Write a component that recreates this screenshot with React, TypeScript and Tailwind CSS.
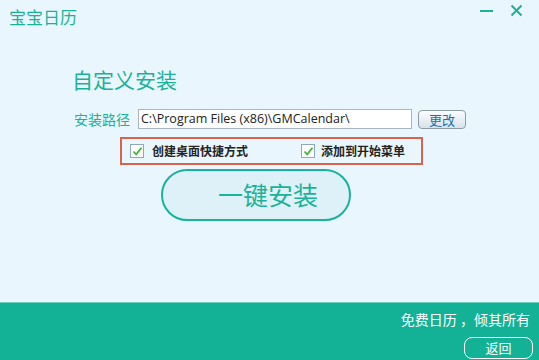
import React from "react";

const font = { fontFamily: '"Noto Sans CJK SC", "Noto Sans", sans-serif' };

function Check() {
  return (
    <div className="w-[14px] h-[14px] border border-[#8fa8bf] bg-white flex items-center justify-center">
      <svg width="11" height="11" viewBox="0 0 11 11">
        <path d="M1.5 5.5 L4.2 8.3 L9.5 1.8" stroke="#3fb832" strokeWidth="1.8" fill="none" />
      </svg>
    </div>
  );
}

export default function App() {
  return (
    <div className="w-[539px] h-[360px] bg-[#eaf6fd] flex flex-col overflow-hidden" style={font}>
      <div className="h-[302px] flex flex-col">
        <div className="flex items-start justify-between">
          <div className="pl-[9px] pt-[5px] text-[17px] leading-[24px] text-[#1ab39a]">宝宝日历</div>
          <div className="flex items-start pr-[16px] pt-[3px] gap-[17px]">
            <div className="w-[13px] h-[2px] bg-[#1ab39a] mt-[7px]" />
            <svg width="13" height="13" viewBox="0 0 13 13" className="mt-[1px]">
              <path d="M1.5 1.5 L11.5 11.5 M11.5 1.5 L1.5 11.5" stroke="#1ab39a" strokeWidth="2" />
            </svg>
          </div>
        </div>
        <div className="pl-[72px] pt-[36px] text-[21px] leading-[28px] text-[#1ab39a]">自定义安装</div>
        <div className="flex items-center pl-[74px] pt-[16px]">
          <div className="text-[14px] leading-[20px] text-[#1ab39a] w-[64px]">安装路径</div>
          <div className="w-[274px] h-[20px] bg-white border border-[#a9b5bf] px-[2px] text-[12.5px] leading-[18px] text-[#222]" style={{ fontFamily: '"Open Sans", "Noto Sans", sans-serif' }}>
            C:\Program Files (x86)\GMCalendar\
          </div>
          <div className="ml-[6px] w-[48px] h-[19px] rounded-[4px] border border-[#8f9aa3] bg-gradient-to-b from-[#fbfdfe] to-[#d8e2ea] text-[13px] leading-[17px] text-[#1e6fa8] text-center">更改</div>
        </div>
        <div className="ml-[120px] mt-[8px] w-[303px] h-[28px] border-2 border-[#d8644c] flex items-center">
          <div className="flex items-center pl-[8px] w-[179px]">
            <Check />
            <span className="ml-[8px] text-[12px] font-bold text-[#222]">创建桌面快捷方式</span>
          </div>
          <div className="flex items-center">
            <Check />
            <span className="ml-[6px] text-[12px] font-bold text-[#222]">添加到开始菜单</span>
          </div>
        </div>
        <div className="ml-[161px] mt-[4px] w-[190px] h-[52px] rounded-full border-2 border-[#1ab39a] bg-[#def1f8] flex items-center justify-center pl-[24px] text-[25px] text-[#1ab39a]">
          一键安装
        </div>
      </div>
      <div className="flex-1 bg-[#13b296] border-t border-[#6ccfbd] flex flex-col items-end pr-[9px]">
        <div className="pt-[6px] text-[14px] leading-[20px] text-white">免费日历 ，倾其所有</div>
        <div className="mt-[8px] mr-[-3px] w-[69px] h-[22px] rounded-[8px] border border-white flex items-center justify-center text-[13px] text-white">返回</div>
      </div>
    </div>
  );
}
